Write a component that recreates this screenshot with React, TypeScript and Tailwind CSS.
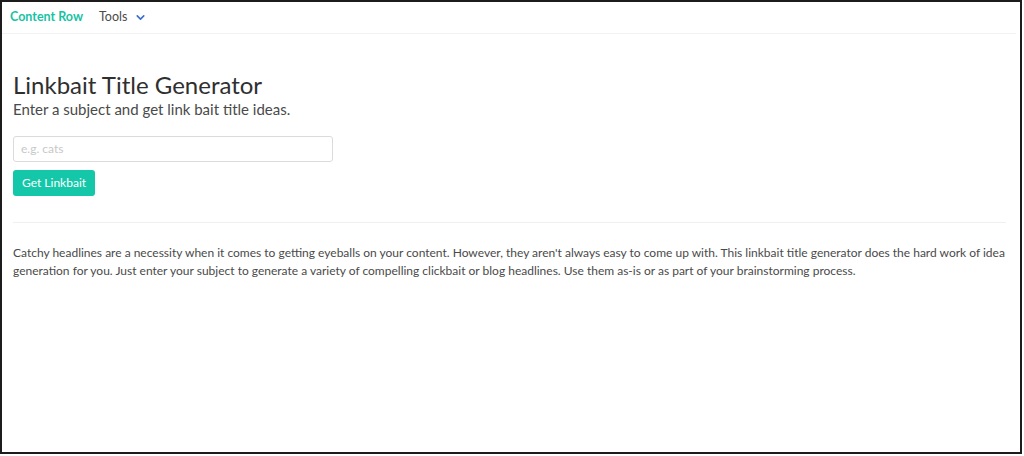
import { ChevronDown } from 'lucide-react';

const font = { fontFamily: 'Lato, "Open Sans", sans-serif' };

export default function App() {
  return (
    <div className="w-[1024px] h-[456px] bg-white" style={font}>
      <div className="w-[1022px] h-[454px] border-2 border-[#1c1c1c] flex flex-col">
        <nav className="h-[32px] mr-[4px] flex items-center border-b border-[#f2f2f2] px-[8px] text-[12.5px]">
          <span className="font-bold text-[#18c2a4]">Content Row</span>
          <span className="ml-[16px] text-[#4a4a4a]">Tools</span>
          <ChevronDown className="ml-[7px] w-[13px] h-[13px] text-[#3a6fd0]" strokeWidth={3} />
        </nav>

        <main className="px-[11px] pt-[36px]">
          <h1 className="text-[24px] leading-[30px] text-[#2f2f2f]">Linkbait Title Generator</h1>
          <p className="text-[15px] leading-[18px] text-[#4a4a4a]">Enter a subject and get link bait title ideas.</p>

          <div className="mt-[17px]">
            <input
              className="w-[320px] h-[26px] rounded-[3px] border border-[#dbdbdb] px-[7px] text-[12px] text-[#363636] placeholder:text-[#c8c8c8] outline-none"
              placeholder="e.g. cats"
              style={font}
            />
          </div>
          <button className="mt-[8px] h-[26px] px-[9px] rounded-[3px] bg-[#13c7a8] text-white text-[12px]">
            Get Linkbait
          </button>

          <hr className="mt-[26px] mr-[3px] border-0 border-t border-[#f0f0f0]" />

          <p className="mt-[21px] text-[12px] leading-[18px] text-[#4a4a4a] pr-[4px]">
            Catchy headlines are a necessity when it comes to getting eyeballs on your content. However, they aren't always easy to come up with. This linkbait title generator does the hard work of idea generation for you. Just enter your subject to generate a variety of compelling clickbait or blog headlines. Use them as-is or as part of your brainstorming process.
          </p>
        </main>
      </div>
    </div>
  );
}
